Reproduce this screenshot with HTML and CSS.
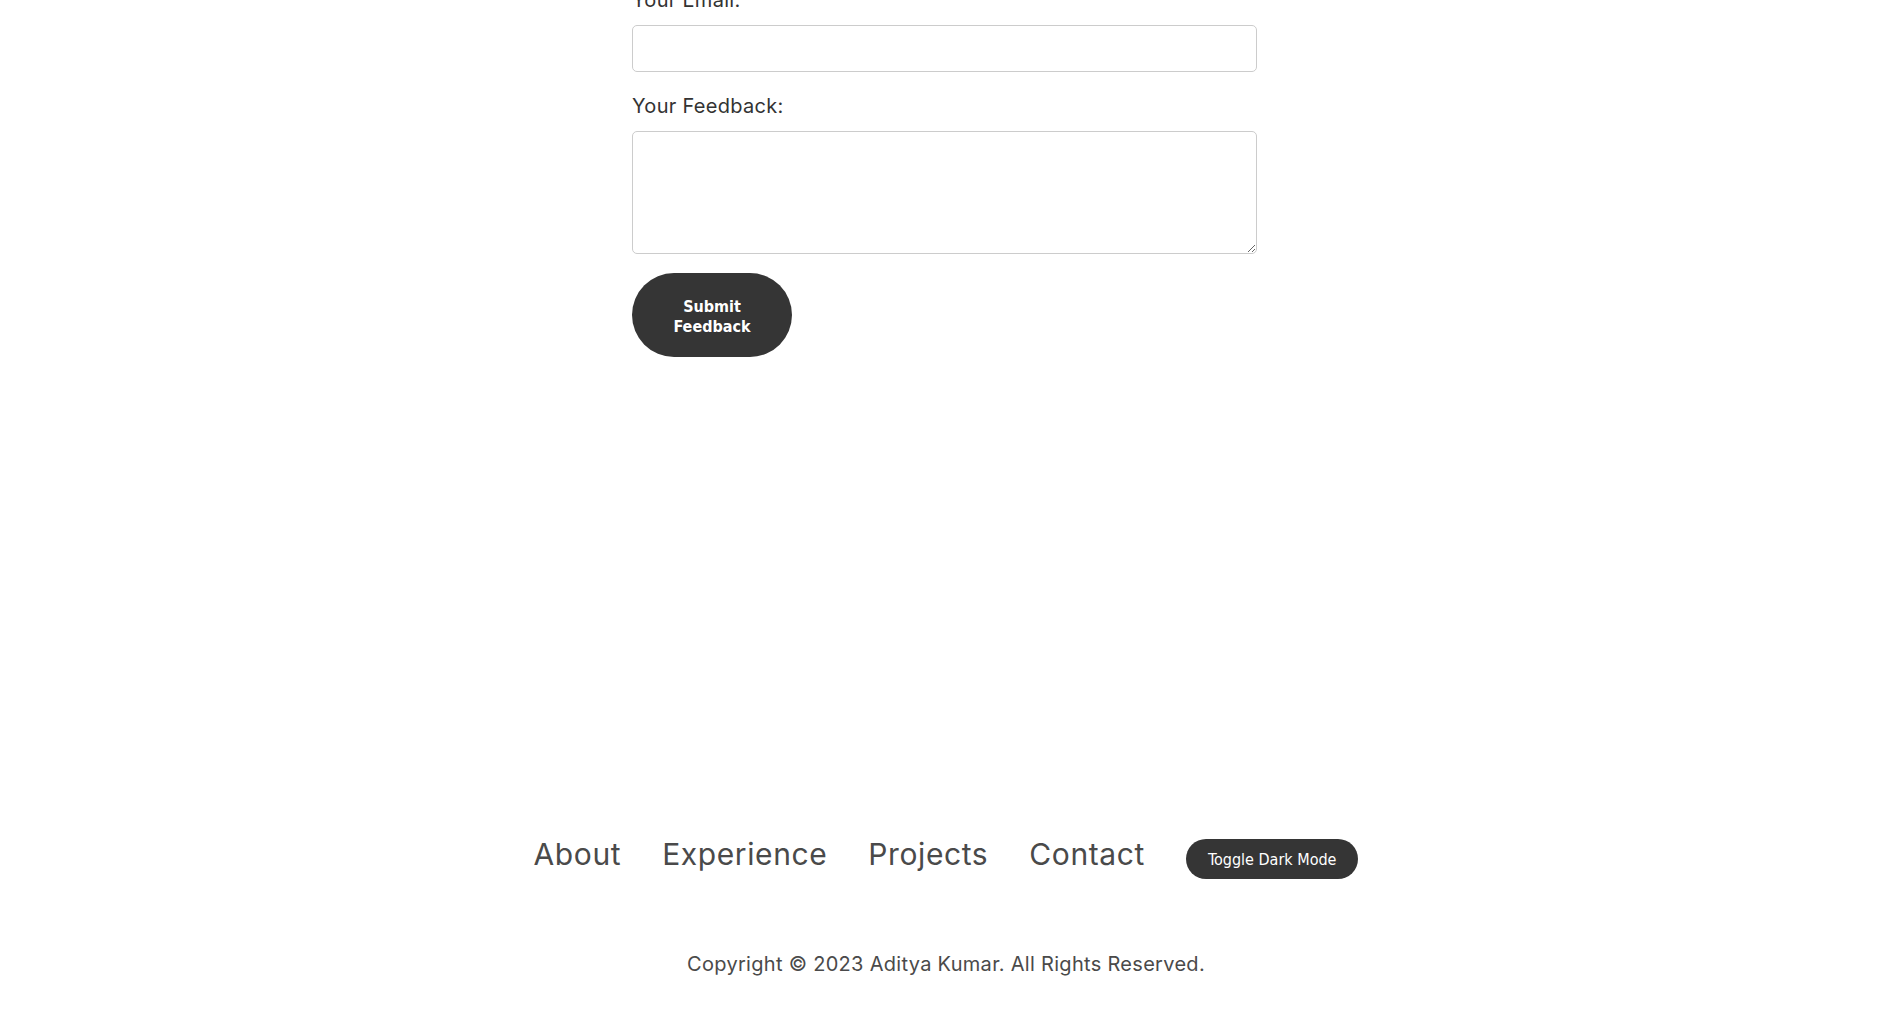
FILE: index.html
```html
<!DOCTYPE html>
<html lang="en">
<head>
<meta charset="utf-8">
<title>Feedback</title>
<link rel="stylesheet" href="styles.css">
</head>
<body>
<main class="page">
  <form class="feedback-form">
    <label class="field-label" for="email">Your Email:</label>
    <input class="field-input" id="email" type="email">
    <label class="field-label" for="feedback">Your Feedback:</label>
    <textarea class="field-area" id="feedback"></textarea>
    <button class="submit-btn" type="button">Submit Feedback</button>
  </form>
</main>
<footer class="site-footer">
  <nav class="footer-nav">
    <a class="nav-link" href="#about">About</a>
    <a class="nav-link" href="#experience">Experience</a>
    <a class="nav-link" href="#projects">Projects</a>
    <a class="nav-link" href="#contact">Contact</a>
    <button class="toggle-btn" type="button">Toggle Dark Mode</button>
  </nav>
  <p class="copyright">Copyright © 2023 Aditya Kumar. All Rights Reserved.</p>
</footer>
</body>
</html>
```
FILE: styles.css
```css
html, body {
  margin: 0;
  padding: 0;
  background: #fff;
}
body {
  font-family: Inter, "Noto Sans", sans-serif;
  color: #333;
}
.page {
  display: flex;
  justify-content: center;
  padding-right: 3px;
}
.feedback-form {
  width: 625px;
  margin-top: -15px;
  display: flex;
  flex-direction: column;
  align-items: flex-start;
}
.field-label {
  display: block;
  font-size: 20px;
  line-height: 30px;
  letter-spacing: 0.3px;
  color: #333;
  margin-bottom: 10px;
}
.field-input,
.field-area {
  display: block;
  box-sizing: border-box;
  width: 100%;
  border: 1px solid #ccc;
  border-radius: 5px;
  background: #fff;
  margin: 0 0 19px 0;
  padding: 8px;
  font-family: inherit;
  font-size: 16px;
}
.field-input {
  height: 47px;
}
.field-area {
  height: 123px;
}
.submit-btn {
  width: 160px;
  height: 84px;
  border: none;
  border-radius: 42px;
  background: #353535;
  color: #fff;
  font-family: "DejaVu Sans", sans-serif;
  font-stretch: condensed;
  font-weight: bold;
  font-size: 16px;
  line-height: 20px;
  padding: 3px 38px 0;
}
.site-footer {
  margin-top: 482px;
  display: flex;
  flex-direction: column;
  align-items: center;
}
.footer-nav {
  display: flex;
  align-items: baseline;
  gap: 41px;
}
.nav-link {
  font-size: 30px;
  line-height: 30px;
  color: #4a4a4a;
  text-decoration: none;
  letter-spacing: 0.6px;
}
.toggle-btn {
  border: none;
  background: #353535;
  color: #fff;
  border-radius: 20px;
  font-family: "DejaVu Sans", sans-serif;
  font-stretch: condensed;
  font-size: 16px;
  line-height: 20px;
  padding: 11px 22px 9px;
}
.copyright {
  margin: 70px 0 0;
  font-size: 20px;
  line-height: 30px;
  color: #4a4a4a;
  letter-spacing: 0.3px;
}
```
